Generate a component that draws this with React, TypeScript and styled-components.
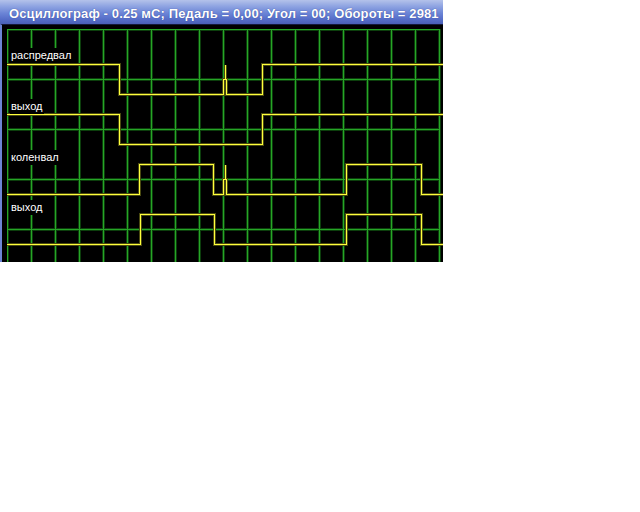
import React from "react";
import styled, { createGlobalStyle } from "styled-components";

const GlobalStyle = createGlobalStyle`
  html, body {
    margin: 0;
    padding: 0;
    background: #ffffff;
  }
`;

type Trace = {
  label: string;
  top: number;
  path: string;
};

// plot area starts at (7, 29) on the page; viewBox keeps page coordinates
const PLOT_X = 7;
const PLOT_Y = 29;
const PLOT_W = 436;
const PLOT_H = 233;
const CELL_W = 24;
const CELL_H = 50;

const traces: Trace[] = [
  {
    label: "распредвал",
    top: 19,
    path: "M7,64.5 H119.5 V94.5 H223.5 V79.5 H225.5 V64.5 V79.5 H226.5 V94.5 H262.5 V64.5 H443",
  },
  {
    label: "выход",
    top: 70,
    path: "M7,114.5 H119.5 V144.5 H262.5 V114.5 H443",
  },
  {
    label: "коленвал",
    top: 121,
    path: "M7,194.5 H139.5 V164.5 H213.5 V194.5 H223.5 V179.5 H225.5 V164.5 V179.5 H226.5 V194.5 H346.5 V164.5 H421.5 V194.5 H443",
  },
  {
    label: "выход",
    top: 171,
    path: "M7,244.5 H140.5 V214.5 H214.5 V244.5 H346.5 V214.5 H421.5 V244.5 H443",
  },
];

// grid lines: a dim green glow with a bright 1px core on top
const GridLines: React.FC<{ color: string; width: number }> = ({ color, width }) => {
  const verticals: number[] = [];
  for (let x = PLOT_X; x <= PLOT_X + 18 * CELL_W; x += CELL_W) verticals.push(x + 0.5);
  const horizontals: number[] = [];
  for (let y = PLOT_Y; y < PLOT_Y + PLOT_H; y += CELL_H) horizontals.push(y + 0.5);
  const right = PLOT_X + 18 * CELL_W + 0.5;

  return (
    <g stroke={color} strokeWidth={width} shapeRendering="crispEdges">
      {verticals.map((x) => (
        <line key={`v${x}`} x1={x} y1={PLOT_Y} x2={x} y2={PLOT_Y + PLOT_H} />
      ))}
      {horizontals.map((y) => (
        <line key={`h${y}`} x1={PLOT_X} y1={y} x2={right} y2={y} />
      ))}
    </g>
  );
};

const Traces: React.FC<{ color: string; width: number }> = ({ color, width }) => (
  <g fill="none" stroke={color} strokeWidth={width} shapeRendering="crispEdges">
    {traces.map((t, i) => (
      <path key={i} d={t.path} />
    ))}
  </g>
);

export default function App() {
  return (
    <>
      <GlobalStyle />
      <Window>
        <TitleBar>Осциллограф - 0.25 мС; Педаль = 0,00; Угол = 00; Обороты = 2981</TitleBar>
        <Frame>
          <Scope>
            <svg
              width={PLOT_W}
              height={PLOT_H}
              viewBox={`${PLOT_X} ${PLOT_Y} ${PLOT_W} ${PLOT_H}`}
            >
              <GridLines color="#0c3e0c" width={3} />
              <GridLines color="#26a626" width={1} />
              <Traces color="#4a4a10" width={3} />
              <Traces color="#ffff3c" width={1} />
            </svg>
            {traces.map((t, i) => (
              <Label key={i} $top={t.top}>
                {t.label}
              </Label>
            ))}
          </Scope>
        </Frame>
      </Window>
    </>
  );
}

const Window = styled.div`
  width: 443px;
  height: 262px;
  display: flex;
  flex-direction: column;
  overflow: hidden;
  background: #000;
`;

const TitleBar = styled.div`
  height: 24px;
  box-sizing: border-box;
  padding: 4px 0 0 9px;
  line-height: 20px;
  white-space: nowrap;
  overflow: hidden;
  font-family: "Liberation Sans", Arial, sans-serif;
  font-weight: bold;
  font-size: 13px;
  letter-spacing: 0.12px;
  color: #ffffff;
  text-shadow: 0 0 1px #2a3a8a;
  background: linear-gradient(
    to bottom,
    #b4c2ea 0%,
    #90a5e2 25%,
    #6b84d6 55%,
    #566ec8 80%,
    #4a60b6 100%
  );
`;

const Frame = styled.div`
  flex: 1;
  border-left: 2px solid #6d86d6;
  border-top: 1px solid #14183a;
  padding: 4px 0 0 5px;
  background: #000;
`;

const Scope = styled.div`
  position: relative;
  width: ${PLOT_W}px;
  height: ${PLOT_H}px;

  svg {
    display: block;
  }
`;

const Label = styled.span<{ $top: number }>`
  position: absolute;
  left: 3px;
  top: ${(p) => p.$top}px;
  padding: 0 2px 0 1px;
  height: 15px;
  line-height: 15px;
  background: #000;
  color: #ffffff;
  font-family: "Liberation Sans", Arial, sans-serif;
  font-size: 11px;
  white-space: nowrap;
`;
